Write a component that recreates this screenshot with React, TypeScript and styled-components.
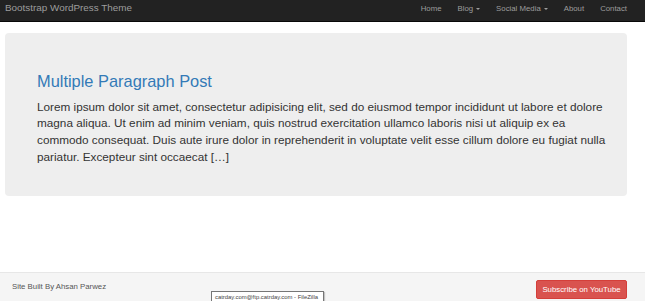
import React from "react";
import styled, { createGlobalStyle } from "styled-components";

const Global = createGlobalStyle`
  html, body { margin: 0; padding: 0; background: #fff; }
  body { font-family: "Liberation Sans", Arial, sans-serif; color: #333; }
  * { box-sizing: border-box; }
`;

const Page = styled.div`
  position: relative;
  min-height: 301px;
  display: flex;
  flex-direction: column;
  overflow: hidden;
`;

const NavBar = styled.nav`
  height: 22px;
  background: #222;
  border-bottom: 1px solid #080808;
  display: flex;
  align-items: center;
  justify-content: space-between;
  padding: 0 10px 0 5px;
`;

const Brand = styled.a`
  color: #9d9d9d;
  font-size: 9.9px;
  text-decoration: none;
  line-height: 1;
  margin-top: -5px;
`;

const Menu = styled.ul`
  list-style: none;
  margin: 0;
  padding: 0;
  display: flex;
  margin-top: -4px;
`;

const MenuItem = styled.li`
  color: #9d9d9d;
  font-size: 7.8px;
  padding: 0 8px;
  display: flex;
  align-items: center;
  gap: 3px;
`;

const Caret = styled.span`
  display: inline-block;
  width: 0;
  height: 0;
  border-left: 2px solid transparent;
  border-right: 2px solid transparent;
  border-top: 2px solid #9d9d9d;
  margin-top: 1px;
`;

const Main = styled.main`
  flex: 1;
  padding: 11px 18px 0 5px;
`;

const Jumbotron = styled.section`
  background: #eee;
  border-radius: 4px;
  height: 163px;
  padding: 28px 20px 0 32px;
`;

const Title = styled.h2`
  margin: 11px 0 0 0;
  font-weight: 400;
  font-size: 16.4px;
  line-height: 1.15;
  color: #337ab7;
`;

const Excerpt = styled.p`
  margin: 8px 0 0 0;
  font-size: 11.75px;
  line-height: 16.6px;
  color: #333;
`;

const Footer = styled.footer`
  height: 29px;
  background: #f5f5f5;
  border-top: 1px solid #e7e7e7;
  display: flex;
  align-items: center;
  justify-content: space-between;
  padding: 0 18px 0 12px;
`;

const Credit = styled.span`
  font-size: 7.8px;
  color: #555;
  margin-top: -1px;
`;

const YouTubeButton = styled.a`
  background: #d9534f;
  border: 1px solid #d43f3a;
  border-radius: 2px;
  color: #fff;
  font-size: 7.8px;
  height: 19px;
  width: 91px;
  display: flex;
  align-items: center;
  justify-content: center;
  text-decoration: none;
  margin-top: 4px;
`;

const Tooltip = styled.div`
  position: absolute;
  left: 211px;
  top: 291px;
  width: 113px;
  height: 12px;
  background: #fff;
  border: 1px solid #767676;
  font-size: 5.9px;
  color: #444;
  padding: 1px 3px;
  white-space: nowrap;
  overflow: hidden;
  line-height: 8px;
  box-shadow: 1px 1px 1px rgba(0,0,0,0.2);
`;

const items = [
  { label: "Home" },
  { label: "Blog", dropdown: true },
  { label: "Social Media", dropdown: true },
  { label: "About" },
  { label: "Contact" },
];

export default function App() {
  return (
    <Page>
      <Global />
      <NavBar>
        <Brand href="#">Bootstrap WordPress Theme</Brand>
        <Menu>
          {items.map((it) => (
            <MenuItem key={it.label}>
              {it.label}
              {it.dropdown && <Caret />}
            </MenuItem>
          ))}
        </Menu>
      </NavBar>
      <Main>
        <Jumbotron>
          <Title>Multiple Paragraph Post</Title>
          <Excerpt>
            Lorem ipsum dolor sit amet, consectetur adipisicing elit, sed do eiusmod tempor incididunt ut labore et dolore
            magna aliqua. Ut enim ad minim veniam, quis nostrud exercitation ullamco laboris nisi ut aliquip ex ea
            commodo consequat. Duis aute irure dolor in reprehenderit in voluptate velit esse cillum dolore eu fugiat nulla
            pariatur. Excepteur sint occaecat […]
          </Excerpt>
        </Jumbotron>
      </Main>
      <Footer>
        <Credit>Site Built By Ahsan Parwez</Credit>
        <YouTubeButton href="#">Subscribe on YouTube</YouTubeButton>
      </Footer>
      <Tooltip>catrday.com@ftp.catrday.com - FileZilla</Tooltip>
    </Page>
  );
}
